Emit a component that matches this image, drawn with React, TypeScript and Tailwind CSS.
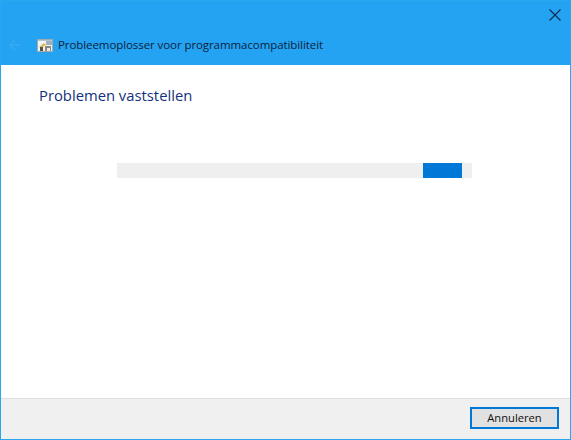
function AppIcon() {
  return (
    <svg width="16" height="16" viewBox="0 0 16 16" className="shrink-0">
      <rect x="0.5" y="2.5" width="15" height="12" fill="#f2f3f4" stroke="#a3a9ae" />
      <rect x="1" y="3" width="14" height="1" fill="#b4c3d0" />
      <rect x="9" y="4" width="6" height="4" fill="#9fb0bf" />
      <path d="M2 10 L7 6 L9 8 L4 11 Z" fill="#dcb85a" />
      <path d="M3 14 V10 H6 V14 Z" fill="#55544c" />
      <path d="M8 14 V9 H14 V14 Z" fill="#8b8a78" />
      <rect x="10" y="11" width="3" height="3" fill="#e8e8e0" />
    </svg>
  )
}

function BackArrow() {
  return (
    <svg width="16" height="16" viewBox="0 0 16 16" fill="none" stroke="#3ba9f1" strokeWidth="1.4" className="shrink-0">
      <path d="M14 8 H3 M8 3 L3 8 L8 13" />
    </svg>
  )
}

function CloseIcon() {
  return (
    <svg width="12" height="12" viewBox="0 0 12 12" fill="none" stroke="#0f2a4a" strokeWidth="1.1" className="shrink-0">
      <path d="M0.5 0.5 L11.5 11.5 M11.5 0.5 L0.5 11.5" />
    </svg>
  )
}

export default function App() {
  return (
    <div className="w-[571px] h-[440px] flex flex-col border border-[#2ba5ee] bg-white font-['Open_Sans','Noto_Sans',sans-serif]">
      <header className="h-[64px] shrink-0 bg-[#24a3f2] flex flex-col">
        <div className="h-[36px] flex justify-end items-start pt-[8px] pr-[9px]">
          <CloseIcon />
        </div>
        <div className="flex items-center pl-[6px]">
          <BackArrow />
          <div className="ml-[14px]">
            <AppIcon />
          </div>
          <span className="ml-[5px] text-[11.5px] leading-[16px] tracking-[-0.08px] text-[#0c1f3d] whitespace-nowrap">
            Probleemoplosser voor programmacompatibiliteit
          </span>
        </div>
      </header>

      <main className="flex-1 flex flex-col">
        <h1 className="ml-[38px] mt-[19px] text-[14.8px] leading-[22px] font-normal text-[#12317c] whitespace-nowrap">
          Problemen vaststellen
        </h1>
        <div className="ml-[116px] mt-[57px] w-[355px] h-[15px] bg-[#efefef] flex justify-end pr-[10px]">
          <div className="w-[39px] h-full bg-[#0078d7]" />
        </div>
      </main>

      <footer className="h-[41px] shrink-0 bg-[#f0f0f0] border-t border-[#dfdfdf] flex justify-end items-start pt-[8px] pr-[11px]">
        <button className="w-[89px] h-[22px] border-2 border-[#0078d7] bg-[#e1e1e1] text-[11.2px] leading-none text-[#111111]">
          Annuleren
        </button>
      </footer>
    </div>
  )
}
